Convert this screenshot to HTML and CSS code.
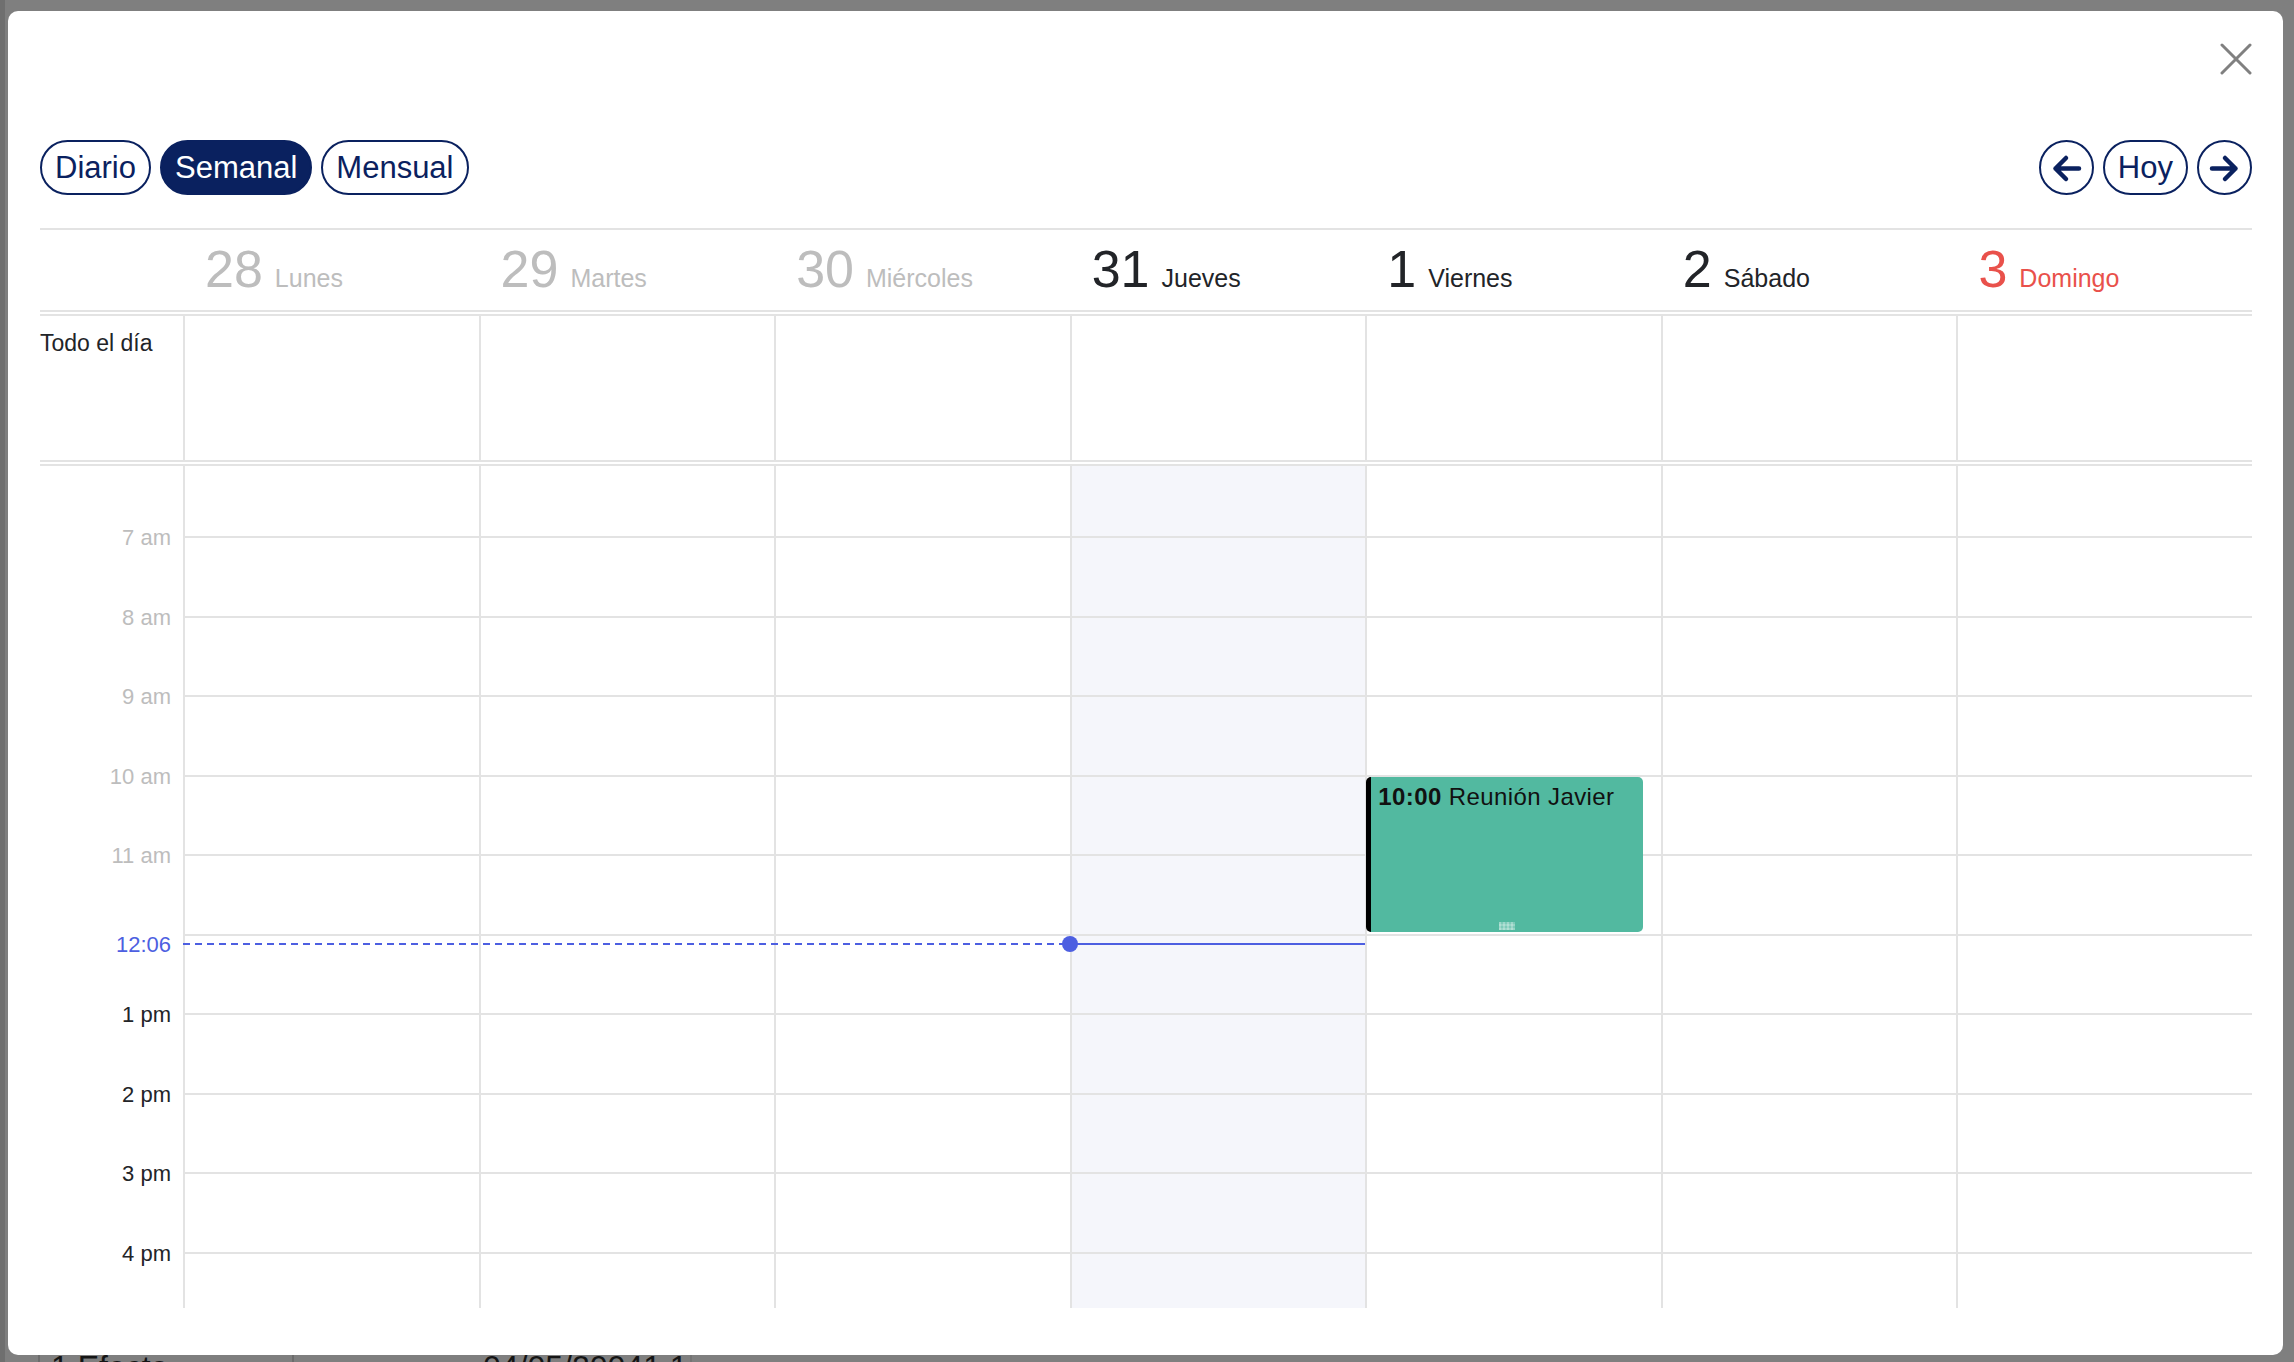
FILE: index.html
```html
<!DOCTYPE html>
<html lang="es">
<head>
<meta charset="utf-8">
<title>Calendario semanal</title>
<link rel="stylesheet" href="styles.css">
</head>
<body>
<div class="page">
  <div class="page-top"></div>
  <div class="page-row">
    <div class="pcell pc0"></div>
    <div class="pcell pc1">1.Efecto</div>
    <div class="pcell pc2">04/05/20041 1</div>
    <div class="pcell pc3"></div>
  </div>
</div>

<div class="modal">
  <div class="topbar">
    <button class="close" aria-label="Cerrar">
      <svg width="32" height="32" viewBox="0 0 32 32"><path d="M2 2L30 30M30 2L2 30" stroke="#808080" stroke-width="3" stroke-linecap="round" fill="none"/></svg>
    </button>
  </div>

  <div class="toolbar">
    <div class="group">
      <button class="pill">Diario</button>
      <button class="pill active">Semanal</button>
      <button class="pill">Mensual</button>
    </div>
    <div class="group">
      <button class="pill round" aria-label="Anterior">
        <svg width="51" height="51" viewBox="0 0 51 51"><path d="M38 26.5H14.5M25 16L14.5 26.5L25 37" stroke="#0a215f" stroke-width="4.5" stroke-linecap="round" stroke-linejoin="round" fill="none"/></svg>
      </button>
      <button class="pill">Hoy</button>
      <button class="pill round" aria-label="Siguiente">
        <svg width="51" height="51" viewBox="0 0 51 51"><path d="M13 26.5H36.5M26 16L36.5 26.5L26 37" stroke="#0a215f" stroke-width="4.5" stroke-linecap="round" stroke-linejoin="round" fill="none"/></svg>
      </button>
    </div>
  </div>

  <div class="cal">
    <div class="head">
      <div class="gut"></div>
      <div class="day past"><span class="num">28</span><span class="name">Lunes</span></div>
      <div class="day past"><span class="num">29</span><span class="name">Martes</span></div>
      <div class="day past"><span class="num">30</span><span class="name">Miércoles</span></div>
      <div class="day"><span class="num">31</span><span class="name">Jueves</span></div>
      <div class="day"><span class="num">1</span><span class="name">Viernes</span></div>
      <div class="day"><span class="num">2</span><span class="name">Sábado</span></div>
      <div class="day sunday"><span class="num">3</span><span class="name">Domingo</span></div>
    </div>

    <div class="allday">
      <div class="gut">Todo el día</div>
      <div class="ad"></div><div class="ad"></div><div class="ad"></div><div class="ad"></div><div class="ad"></div><div class="ad"></div><div class="ad"></div>
    </div>

    <div class="body">
      <div class="hours">
        <div class="hour past"><div class="lbl"><span>6 am</span></div><div class="c"></div><div class="c"></div><div class="c"></div><div class="c today"></div><div class="c"></div><div class="c"></div><div class="c"></div></div>
        <div class="hour past"><div class="lbl"><span>7 am</span></div><div class="c"></div><div class="c"></div><div class="c"></div><div class="c today"></div><div class="c"></div><div class="c"></div><div class="c"></div></div>
        <div class="hour past"><div class="lbl"><span>8 am</span></div><div class="c"></div><div class="c"></div><div class="c"></div><div class="c today"></div><div class="c"></div><div class="c"></div><div class="c"></div></div>
        <div class="hour past"><div class="lbl"><span>9 am</span></div><div class="c"></div><div class="c"></div><div class="c"></div><div class="c today"></div><div class="c"></div><div class="c"></div><div class="c"></div></div>
        <div class="hour past"><div class="lbl"><span>10 am</span></div><div class="c"></div><div class="c"></div><div class="c"></div><div class="c today"></div><div class="c"></div><div class="c"></div><div class="c"></div></div>
        <div class="hour past"><div class="lbl"><span>11 am</span></div><div class="c"></div><div class="c"></div><div class="c"></div><div class="c today"></div><div class="c"></div><div class="c"></div><div class="c"></div></div>
        <div class="hour hidden-lbl"><div class="lbl"><span>12 pm</span></div><div class="c"></div><div class="c"></div><div class="c"></div><div class="c today"></div><div class="c"></div><div class="c"></div><div class="c"></div></div>
        <div class="hour"><div class="lbl"><span>1 pm</span></div><div class="c"></div><div class="c"></div><div class="c"></div><div class="c today"></div><div class="c"></div><div class="c"></div><div class="c"></div></div>
        <div class="hour"><div class="lbl"><span>2 pm</span></div><div class="c"></div><div class="c"></div><div class="c"></div><div class="c today"></div><div class="c"></div><div class="c"></div><div class="c"></div></div>
        <div class="hour"><div class="lbl"><span>3 pm</span></div><div class="c"></div><div class="c"></div><div class="c"></div><div class="c today"></div><div class="c"></div><div class="c"></div><div class="c"></div></div>
        <div class="hour"><div class="lbl"><span>4 pm</span></div><div class="c"></div><div class="c"></div><div class="c"></div><div class="c today"></div><div class="c"></div><div class="c"></div><div class="c"></div></div>
        <div class="hour"><div class="lbl"><span>5 pm</span></div><div class="c"></div><div class="c"></div><div class="c"></div><div class="c today"></div><div class="c"></div><div class="c"></div><div class="c"></div></div>
      </div>

      <div class="event">
        <div class="ev-text"><b>10:00</b> Reunión Javier</div>
        <div class="grip"></div>
      </div>

      <div class="now">
        <span class="now-lbl">12:06</span>
        <div class="now-dash"></div>
        <div class="now-solid"></div>
        <div class="now-dot"></div>
      </div>
    </div>
  </div>
</div>
</body>
</html>
```

FILE: styles.css
```css
* { box-sizing: border-box; }

html, body {
  margin: 0;
  padding: 0;
}

body {
  width: 2294px;
  height: 1362px;
  overflow: hidden;
  position: relative;
  background: #7f7f7f;
  font-family: "Liberation Sans", Arial, Helvetica, sans-serif;
  color: #222428;
}

/* underlying (dimmed) page */
.page {
  display: grid;
  grid-template-rows: 1351px 40px;
  height: 1362px;
}

.page-top {
  border-left: 5px solid #6f6f6f;
}

.page-row {
  display: grid;
  grid-template-columns: 38px 254px 398px 1fr;
  font-size: 32px;
  line-height: 32px;
  color: #151515;
}

.pcell { white-space: nowrap; }
.pc0 { border-left: 5px solid #6f6f6f; }
.pc1 { border-left: 2px solid #6c6c6c; padding-left: 11px; }
.pc2 { border-left: 2px solid #6c6c6c; padding-left: 189px; }
.pc3 { border-left: 2px solid #747474; }

/* modal overlay */
.modal {
  position: absolute;
  left: 8px;
  top: 11px;
  width: 2275px;
  height: 1344px;
  background: #fff;
  border-radius: 10px;
  padding: 32px 31px 0 32px;
}

.topbar {
  display: flex;
  justify-content: flex-end;
  height: 32px;
}

.close {
  width: 32px;
  height: 32px;
  padding: 0;
  border: 0;
  background: none;
  display: block;
}
.close svg { display: block; }

.toolbar {
  margin-top: 65px;
  height: 55px;
  display: flex;
  justify-content: space-between;
}

.group {
  display: flex;
  gap: 9px;
}

.pill {
  height: 55px;
  padding: 0 13px;
  border: 2px solid #0a215f;
  border-radius: 28px;
  background: #fff;
  color: #0a215f;
  font-family: "Liberation Sans", Arial, Helvetica, sans-serif;
  font-size: 31px;
  line-height: 1;
  display: flex;
  align-items: center;
  justify-content: center;
}

.pill.active {
  background: #0a215f;
  color: #fff;
}

.pill.round {
  width: 55px;
  padding: 0;
}
.pill.round svg { display: block; }

/* calendar */
.cal {
  margin-top: 33px;
}

.head, .allday, .hour {
  display: grid;
  grid-template-columns: 143px repeat(7, 1fr);
}

.head {
  height: 84px;
  border-top: 2px solid #e3e3e3;
  border-bottom: 2px solid #e3e3e3;
}

.day {
  display: flex;
  align-items: baseline;
  gap: 12px;
  padding: 13px 0 0 22px;
  line-height: 1;
  color: #222428;
  white-space: nowrap;
}

.day .num { font-size: 52px; }
.day .name { font-size: 25px; }
.day.past { color: #bdbdbd; }
.day.sunday { color: #e9514b; }

.allday {
  margin-top: 2px;
  height: 148px;
  border-top: 2px solid #e3e3e3;
  border-bottom: 2px solid #e3e3e3;
}

.allday .gut {
  font-size: 23px;
  line-height: 1.2;
  padding-top: 14px;
  color: #222428;
  white-space: nowrap;
}

.ad { border-left: 2px solid #e3e3e3; }

.body {
  margin-top: 2px;
  height: 844px;
  border-top: 2px solid #e3e3e3;
  position: relative;
  overflow: hidden;
}

.hours {
  margin-top: -9.5px;
}

.hour {
  height: 79.5px;
}

.lbl {
  position: relative;
  font-size: 22px;
  color: #222428;
  text-align: right;
  padding-right: 12px;
}

.lbl span {
  display: block;
  transform: translateY(-50%);
  margin-top: 2px;
  white-space: nowrap;
}

.hour.past .lbl { color: #bdbdbd; }
.hour.hidden-lbl .lbl span { visibility: hidden; }

.c {
  border-left: 2px solid #e3e3e3;
  border-top: 2px solid #e3e3e3;
}

.c.today { background-color: #f5f6fb; }

/* event */
.event {
  position: absolute;
  top: 311px;
  height: 155px;
  left: calc(143px + (100% - 143px) * 4 / 7 + 1px);
  width: 277px;
  background: #52b9a0;
  border-left: 5px solid #000;
  border-radius: 5px;
  padding: 6px 0 0 7px;
  font-size: 24px;
  letter-spacing: 0.4px;
  line-height: 1.2;
  color: #111;
  white-space: nowrap;
}

.ev-text b { font-weight: 700; }

.grip {
  position: absolute;
  bottom: 2px;
  left: 128px;
  width: 16px;
  height: 8px;
  background-color: rgba(255, 255, 255, 0.25);
  background-image:
    linear-gradient(90deg, rgba(255,255,255,0.25) 0 2px, transparent 2px 4px),
    linear-gradient(0deg, rgba(255,255,255,0.2) 0 2px, transparent 2px 4px);
  background-size: 4px 4px, 4px 4px;
}

/* now indicator */
.now {
  position: absolute;
  left: 0;
  right: 0;
  top: 477px;
  height: 2px;
}

.now-lbl {
  position: absolute;
  right: calc(100% - 131px);
  top: 1px;
  transform: translateY(-50%);
  font-size: 22px;
  line-height: 1.149;
  color: #4d5fe1;
  margin-top: 1px;
  white-space: nowrap;
}

.now-dash {
  position: absolute;
  left: 143px;
  width: calc((100% - 143px) * 3 / 7);
  top: 0;
  height: 2px;
  background: repeating-linear-gradient(90deg, #4d5fe1 0 7px, transparent 7px 12px);
}

.now-solid {
  position: absolute;
  left: calc(143px + (100% - 143px) * 3 / 7);
  width: calc((100% - 143px) / 7);
  top: 0;
  height: 2px;
  background: #4d5fe1;
}

.now-dot {
  position: absolute;
  left: calc(143px + (100% - 143px) * 3 / 7 - 8px);
  top: -7px;
  width: 16px;
  height: 16px;
  border-radius: 50%;
  background: #4d5fe1;
}
```
